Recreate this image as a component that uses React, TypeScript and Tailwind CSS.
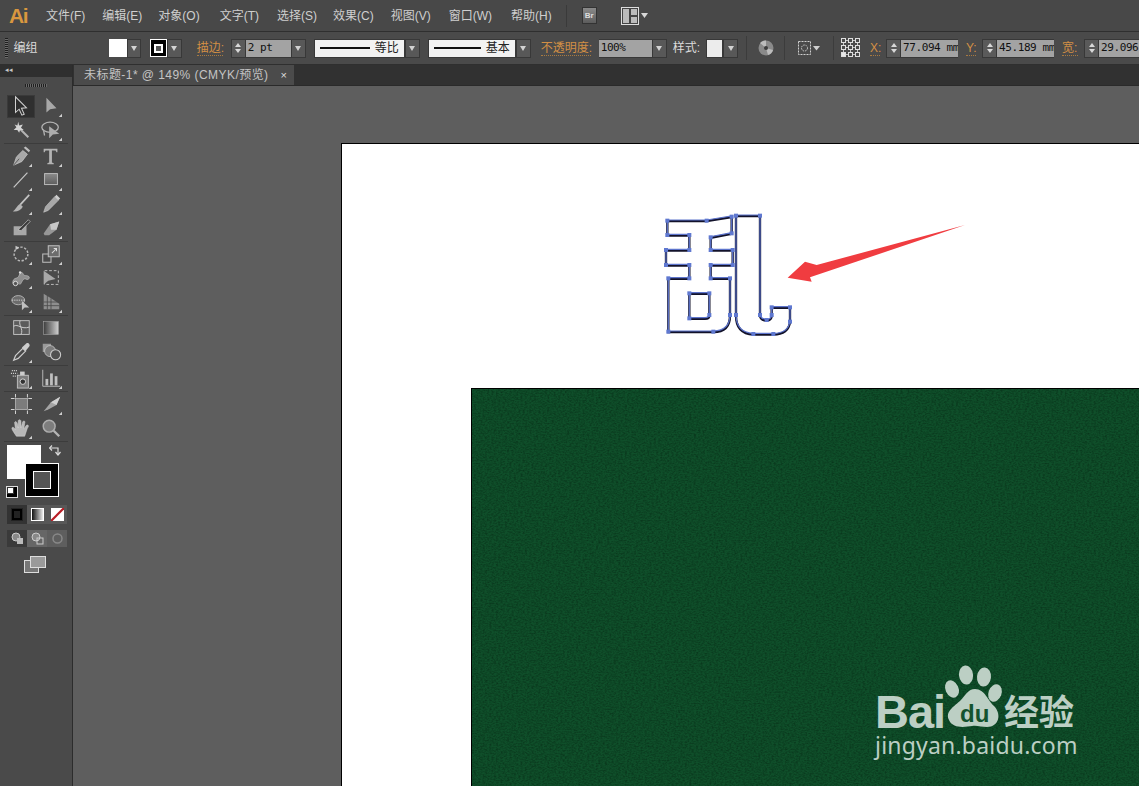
import React from "react";

const cjk = { fontFamily: '"Liberation Sans","Noto Sans CJK SC",sans-serif' };

function Drop({ w = "w-[15px]" }: { w?: string }) {
  return (
    <div className={`${w} h-[19px] bg-[#585858] border border-[#383838] flex items-center justify-center shrink-0`}>
      <div className="w-0 h-0 border-l-[3.5px] border-r-[3.5px] border-t-[5px] border-l-transparent border-r-transparent border-t-[#d2d2d2]" />
    </div>
  );
}

function Spin() {
  return (
    <div className="w-[15px] h-[19px] bg-[#5a5a5a] border border-[#383838] flex flex-col items-center justify-center gap-[2px] shrink-0">
      <div className="w-0 h-0 border-l-[3.5px] border-r-[3.5px] border-b-[4px] border-l-transparent border-r-transparent border-b-[#d8d8d8]" />
      <div className="w-0 h-0 border-l-[3.5px] border-r-[3.5px] border-t-[4px] border-l-transparent border-r-transparent border-t-[#d8d8d8]" />
    </div>
  );
}

function Field({ w, text }: { w: string; text: string }) {
  return (
    <div className={`${w} h-[19px] bg-[#a3a3a3] border-y border-[#383838] text-[#111] text-[11px] leading-[16px] pl-[2px] overflow-hidden whitespace-nowrap shrink-0`} style={{ fontFamily: '"DejaVu Sans Mono",monospace', letterSpacing: "-0.4px" }}>
      {text}
    </div>
  );
}

function Label({ text, ml, w }: { text: string; ml: string; w: string }) {
  return (
    <div className={`${ml} ${w} h-[15px] text-[12px] leading-[14px] text-[#d28f45] border-b border-dotted border-[#a87a40] whitespace-nowrap shrink-0`}>{text}</div>
  );
}

function LineBox({ w, label, ml }: { w: string; label: string; ml: string }) {
  return (
    <div className={`${ml} flex shrink-0`}>
      <div className={`${w} h-[19px] bg-[#f2f2f2] border border-[#383838] flex items-center pl-[5px] pr-[5px] gap-[5px] text-[#222] text-[12px]`}>
        <div className="flex-1 h-[2px] bg-[#111]" />
        <span className="whitespace-nowrap">{label}</span>
      </div>
      <Drop />
    </div>
  );
}

const Sep = ({ ml }: { ml: string }) => <div className={`${ml} w-px h-[24px] bg-[#3c3c3c] shrink-0`} />;

const c = "#b4b4b4";
const corner = <polygon points="24,24 24,20.5 20.5,24" fill="#d0d0d0" />;

const icons: Record<string, React.ReactNode> = {
  sel: <path d="M6 2 L6 19 L10 15.5 L13 22 L15.5 21 L12.5 14.5 L18 14 Z" fill="#2d2d2d" stroke="#d0d0d0" strokeWidth="1.1" />,
  dsel: <>
    <path d="M7 3 L7 19 L11 15.5 L18 14.5 Z" fill="#a8a8a8" />
    {corner}
  </>,
  wand: <>
    <path d="M11 11 L20 20" stroke={c} strokeWidth="2.2" />
    <path d="M9 3 L10 7 L14 6 L12 9.5 L15 12 L11 12 L10 15 L8 12 L4 12 L7 9 L5 6 L8 7 Z" fill="#d4d4d4" />
  </>,
  lasso: <>
    <ellipse cx="11" cy="9" rx="9" ry="5.5" fill="none" stroke={c} strokeWidth="1.4" />
    <path d="M10 8 L10 21 L14 17 L21 16 Z" fill="#adadad" />
    <path d="M4 13 L5 18" stroke={c} strokeWidth="1.4" />
    {corner}
  </>,
  pen: <>
    <path d="M14 6 L19 10 L13 18 L4 22 L7 13 Z" fill="#a8a8a8" stroke="#d0d0d0" strokeWidth="0.7" />
    <path d="M15 3 L17 1.5 L22 6 L20.5 8 Z" fill="#bcbcbc" />
    <path d="M4 22 L10 15" stroke="#555" strokeWidth="1" />
    {corner}
  </>,
  type: <>
    <path d="M4 4 H19 V8 H18 L17 6 H13 V19 L15 20 V21 H8 V20 L10 19 V6 H6 L5 8 H4 Z" fill="#b4b4b4" />
    {corner}
  </>,
  line: <>
    <path d="M4 20 L19 4" stroke="#c8c8c8" strokeWidth="1.3" />
    {corner}
  </>,
  rect: <>
    <defs>
      <linearGradient id="rg" x1="0" y1="0" x2="0" y2="1"><stop offset="0" stopColor="#8a8a8a" /><stop offset="1" stopColor="#5e5e5e" /></linearGradient>
    </defs>
    <rect x="5" y="5" width="14" height="12" fill="url(#rg)" stroke="#c0c0c0" strokeWidth="1" />
    {corner}
  </>,
  brush: <>
    <path d="M21 2 L11 13" stroke="#c4c4c4" strokeWidth="1.8" />
    <path d="M11 12 L14 15 C12 19 7 21 3 20 C6 19 7 14 11 12 Z" fill="#b4b4b4" />
    {corner}
  </>,
  pencil: <>
    <path d="M16 4 L20 8 L9 19 L4 21 L6 15 Z" fill="#a8a8a8" stroke="#cecece" strokeWidth="0.6" />
    <path d="M16 4 L18 2 L22 6 L20 8 Z" fill="#cecece" />
    {corner}
  </>,
  blob: <>
    <path d="M4 10 H13 L18 7 V20 H4 Z" fill="#a8a8a8" />
    <path d="M9 14 L20 3 L22 5 L12 15 Z" fill="#3a3a3a" stroke="#d0d0d0" strokeWidth="0.7" />
  </>,
  eraser: <>
    <path d="M4 18 L11 8 L21 5 L18 14 L10 20 L5 20 Z" fill="#969696" />
    <path d="M11 8 L21 5 L18 14 L12 14 Z" fill="#c8c8c8" />
    {corner}
  </>,
  rotate: <>
    <circle cx="12" cy="12" r="7.5" fill="none" stroke="#b8b8b8" strokeWidth="1.6" strokeDasharray="2.5 1.8" />
    <path d="M6 3 L10 5 L6 8 Z" fill="#c8c8c8" />
    {corner}
  </>,
  scale: <>
    <rect x="3" y="12" width="9" height="9" fill="none" stroke="#bfbfbf" strokeWidth="1.1" />
    <rect x="9" y="3" width="12" height="12" fill="#6c6c6c" stroke="#bfbfbf" strokeWidth="1.1" />
    <path d="M13 11 L18 6 M15 6 H18 V9" stroke="#ddd" strokeWidth="1.1" fill="none" />
    {corner}
  </>,
  warp: <>
    <path d="M3 18 C3 10 9 14 10 9 C11 6 13 5 14 7 C15 11 19 8 21 11 C21 14 19 14 17 13 C14 12 13 17 11 19" fill="#8e8e8e" stroke="#bfbfbf" strokeWidth="0.8" />
    <circle cx="6" cy="18" r="2.4" fill="#555" stroke="#e0e0e0" strokeWidth="1" />
    <circle cx="11" cy="6" r="1.3" fill="#ddd" />
    {corner}
  </>,
  free: <>
    <rect x="5" y="4" width="15" height="15" fill="none" stroke="#c4c4c4" strokeWidth="1" strokeDasharray="3 2" />
    <path d="M4 4 L4 19 L9 15 L17 13 Z" fill="#a8a8a8" />
  </>,
  shape: <>
    <ellipse cx="9" cy="10" rx="7" ry="5" fill="#6c6c6c" stroke="#bfbfbf" strokeWidth="0.9" />
    <path d="M2 10 H16" stroke="#ddd" strokeWidth="0.9" strokeDasharray="1.5 1" />
    <path d="M13 11 L13 21 L16 18 L21 18 Z" fill="#c0c0c0" />
    {corner}
  </>,
  persp: <>
    <path d="M4 3 L12 8 L21 14 V20 H4 Z" fill="#8e8e8e" />
    <path d="M8 5 V20 M12 8 V20 M4 12 H21 M4 16 H21" stroke="#4a4a4a" strokeWidth="0.9" />
    {corner}
  </>,
  mesh: <>
    <rect x="4" y="4" width="17" height="15" fill="#5c5c5c" stroke="#c4c4c4" strokeWidth="1" />
    <path d="M4 10 C9 7 12 14 21 11 M11 4 C9 9 15 13 12 19" stroke="#d4d4d4" strokeWidth="1" fill="none" />
  </>,
  grad: <>
    <defs>
      <linearGradient id="gg"><stop offset="0" stopColor="#3e3e3e" /><stop offset="1" stopColor="#cecece" /></linearGradient>
    </defs>
    <rect x="4" y="5" width="16" height="14" fill="url(#gg)" stroke="#aaa" strokeWidth="0.6" />
  </>,
  drop: <>
    <path d="M4 21 L6 16 L14 8 L17 11 L9 19 Z" fill="none" stroke="#cccccc" strokeWidth="1.3" />
    <path d="M13 7 L18 2.5 C20 1.5 22.5 4 21 6 L17 11 Z" fill="#cccccc" />
    {corner}
  </>,
  blend: <>
    <rect x="3" y="3" width="9" height="9" fill="#999" />
    <circle cx="11" cy="11" r="6" fill="#7c7c7c" stroke="#ccc" strokeWidth="0.8" />
    <circle cx="17" cy="15" r="5.5" fill="#505050" stroke="#ccc" strokeWidth="1.2" />
  </>,
  spray: <>
    <rect x="8" y="9" width="12" height="14" fill="#7c7c7c" stroke="#cccccc" strokeWidth="0.9" />
    <circle cx="14" cy="16" r="3" fill="#333" stroke="#ddd" strokeWidth="1" />
    <rect x="11" y="5" width="5" height="4" fill="#ccc" />
    <path d="M2 4 H8 M1 7 H8 M3 10 H7" stroke="#ccc" strokeWidth="1.2" strokeDasharray="1.2 1" />
    {corner}
  </>,
  graph: <>
    <path d="M3 3 V21 H22" stroke="#c0c0c0" strokeWidth="1" fill="none" />
    <rect x="6" y="13" width="3" height="7" fill="#bfbfbf" />
    <rect x="11" y="7" width="3" height="13" fill="#bfbfbf" />
    <rect x="16" y="10" width="3" height="10" fill="#bfbfbf" />
    {corner}
  </>,
  board: <>
    <rect x="6" y="6" width="13" height="12" fill="#7c7c7c" stroke="#bfbfbf" strokeWidth="0.8" />
    <path d="M1 6 H5 M20 6 H24 M1 18 H5 M20 18 H24 M6 1 V5 M6 19 V23 M19 1 V5 M19 19 V23" stroke="#d2d2d2" strokeWidth="1.1" />
  </>,
  slice: <>
    <path d="M4 20 L12 10 L22 4 L18 13 L9 18 Z" fill="#a4a4a4" />
    <path d="M12 10 L22 4 L18 13 Z" fill="#d0d0d0" />
    {corner}
  </>,
  hand: <>
    <path d="M7 21 C5 18 2 14 2 12 C3 10 5 12 6 14 L5 6 C6 4 7 5 8 7 L9 12 L9 4 C10 2 12 3 12 5 L12 12 L14 5 C15 4 17 4 16 7 L15 13 L18 9 C20 8 21 10 19 12 L16 21 Z" fill="#b8b8b8" stroke="#ddd" strokeWidth="0.5" />
    {corner}
  </>,
  zoom: <>
    <circle cx="10" cy="10" r="6.5" fill="#7d7d7d" stroke="#adadad" strokeWidth="1.6" />
    <path d="M15 15 L21 21" stroke="#b4b4b4" strokeWidth="2.6" />
  </>,
};

function Tool({ n, active }: { n: string; active?: boolean }) {
  return (
    <div className="w-[30px] h-[24px] flex items-center justify-center">
      <div className={`w-[28px] h-[23px] flex items-center justify-center ${active ? "bg-[#2f2f2f] border border-[#3a3a3a]" : ""}`}>
        <svg width="22" height="22" viewBox="0 0 24 24">{icons[n]}</svg>
      </div>
    </div>
  );
}

function ToolRow({ a, b, active }: { a: string; b: string; active?: boolean }) {
  return (
    <div className="flex pl-[6px]">
      <Tool n={a} active={active} />
      <Tool n={b} />
    </div>
  );
}

const ToolSep = () => <div className="h-[2px] mx-[4px] border-b border-[#3c3c3c]" />;

const menus = [
  ["文件(F)", "ml-[19px]"],
  ["编辑(E)", "ml-[17px]"],
  ["对象(O)", "ml-[16px]"],
  ["文字(T)", "ml-[20px]"],
  ["选择(S)", "ml-[18px]"],
  ["效果(C)", "ml-[16px]"],
  ["视图(V)", "ml-[17px]"],
  ["窗口(W)", "ml-[18px]"],
  ["帮助(H)", "ml-[19px]"],
];

function Glyph() {
  const left = "M52 62 L170 62 L245 50 L245 100 L182 112 L182 150 L248 150 L248 195 L182 195 L182 235 L240 235 L240 345 Q240 395 190 395 L55 395 L55 235 L118 235 L118 195 L48 195 L48 150 L118 150 L118 105 L52 105 Z";
  const inner = "M118 280 L178 280 L178 345 Q178 355 165 355 L118 355 Z";
  const right = "M258 47 L330 47 L330 345 Q332 360 350 360 Q365 360 365 345 L365 322 L420 322 L420 365 Q415 402 370 402 L310 402 Q258 400 258 345 Z";
  const pts = [[52,62],[170,62],[245,50],[245,100],[182,112],[182,150],[248,150],[248,195],[182,195],[182,235],[240,235],[240,345],[190,395],[55,395],[55,235],[118,235],[118,195],[48,195],[48,150],[118,150],[118,105],[52,105],[118,280],[178,280],[178,345],[118,355],[258,47],[330,47],[330,345],[350,360],[365,345],[365,322],[420,322],[420,365],[370,402],[310,402],[258,345]];
  return (
    <svg className="absolute left-[577px] top-[114px]" width="320" height="150" viewBox="0 0 960 450">
      {[left, inner, right].map((d, i) => (
        <g key={i} fill="none">
          <path d={d} stroke="#12122a" strokeWidth="7" transform="translate(0 1.5)" />
          <path d={d} stroke="#5d74cc" strokeWidth="3.5" transform="translate(0 -2)" />
        </g>
      ))}
      {pts.map(([x, y], i) => <rect key={i} x={x - 6} y={y - 6} width="12" height="12" fill="#5f78d0" />)}
      <polygon points="945,75 500,195 465,185 413,233 485,245 480,232" fill="#f03c40" />
    </svg>
  );
}

function Watermark() {
  const col = "#bccfc4";
  return (
    <div className="absolute left-[802px] top-[579px] w-[210px] h-[100px]" style={cjk}>
      <div className="relative w-full h-full" style={{ color: col }}>
        <div className="absolute left-0 top-[27px] text-[47px] leading-[40px] font-bold" style={{ fontFamily: '"Liberation Sans",sans-serif', letterSpacing: "-1px" }}>Bai</div>
        <svg className="absolute left-[66px] top-0" width="66" height="72" viewBox="0 0 66 72">
          <ellipse cx="25" cy="10" rx="7" ry="9.5" fill={col} transform="rotate(-6 25 10)" />
          <ellipse cx="43" cy="12" rx="7" ry="9.5" fill={col} transform="rotate(6 43 12)" />
          <ellipse cx="11" cy="24" rx="6.5" ry="9" fill={col} transform="rotate(-25 11 24)" />
          <ellipse cx="54" cy="28" rx="6.5" ry="9" fill={col} transform="rotate(20 54 28)" />
          <path d="M34 24 C44 24 47 36 53 41 C61 49 58 62 46 62 C40 62 36 60 31 61 C24 62 12 64 8 55 C4 47 12 42 19 36 C25 30 27 24 34 24 Z" fill={col} />
        </svg>
        <div className="absolute left-[85px] top-[34px] text-[24px] leading-[30px] font-bold text-[#14532f]" style={{ fontFamily: '"Liberation Sans",sans-serif' }}>du</div>
        <div className="absolute left-[129px] top-[24px] text-[35px] leading-[42px] font-bold whitespace-nowrap" style={{ fontFamily: '"Noto Sans CJK SC",sans-serif' }}>经验</div>
        <div className="absolute left-0 top-[68px] text-[23px] leading-[24px] whitespace-nowrap" style={{ fontFamily: '"Noto Sans",sans-serif', letterSpacing: "0.2px" }}>jingyan.baidu.com</div>
      </div>
    </div>
  );
}

export default function App() {
  return (
    <div className="w-[1139px] h-[786px] overflow-hidden flex flex-col bg-[#5e5e5e]" style={cjk}>
      {/* menu bar */}
      <div className="h-[32px] shrink-0 bg-[#484848] border-b border-[#2f2f2f] flex items-center text-[12px] text-[#cfcfcf]">
        <div className="ml-[9px] w-[18px] text-[21px] leading-[22px] font-bold text-[#d9973f] tracking-[-1.5px]">Ai</div>
        {menus.map(([t, m]) => <div key={t} className={`${m} whitespace-nowrap`}>{t}</div>)}
        <div className="ml-[14px] w-px h-[22px] bg-[#3a3a3a]" />
        <div className="ml-[15px] w-[15px] h-[17px] bg-[linear-gradient(#8a8a8a,#5c5c5c)] border border-[#333] text-[8px] leading-[15px] text-center text-[#ddd] font-bold">Br</div>
        <svg className="ml-[24px]" width="28" height="18" viewBox="0 0 28 18">
          <rect x="0.5" y="0.5" width="17" height="17" fill="#444" stroke="#ddd" />
          <rect x="2" y="2" width="6" height="14" fill="#bbb" />
          <rect x="10" y="2" width="6" height="6" fill="#bbb" />
          <rect x="10" y="10" width="6" height="6" fill="#bbb" />
          <polygon points="20,6 27,6 23.5,11" fill="#d8d8d8" />
        </svg>
      </div>
      {/* control bar */}
      <div className="h-[33px] shrink-0 bg-[#4a4a4a] border-b border-[#2f2f2f] flex items-center text-[12px] text-[#d4d4d4]">
        <div className="ml-[5px] w-[3px] h-[20px] bg-[repeating-linear-gradient(#1e1e1e_0_1px,#6a6a6a_1px_2px)]" />
        <div className="ml-[6px] w-[28px] whitespace-nowrap text-[#dadada]">编组</div>
        <div className="ml-[71px] w-[18px] h-[18px] bg-white shrink-0" />
        <Drop w="w-[14px]" />
        <div className="ml-[9px] w-[17px] h-[18px] bg-black border border-white flex items-center justify-center shrink-0">
          <div className="w-[9px] h-[9px] bg-[#555] border-2 border-white" />
        </div>
        <Drop w="w-[15px]" />
        <Label text="描边:" ml="ml-[15px]" w="w-[26px]" />
        <div className="ml-[8px] flex shrink-0">
          <Spin />
          <Field w="w-[45px]" text="2 pt" />
          <Drop />
        </div>
        <LineBox w="w-[91px]" label="等比" ml="ml-[8px]" />
        <LineBox w="w-[88px]" label="基本" ml="ml-[8px]" />
        <Label text="不透明度:" ml="ml-[10px]" w="w-[50px]" />
        <div className="ml-[8px] flex shrink-0">
          <Field w="w-[53px]" text="100%" />
          <Drop />
        </div>
        <div className="ml-[6px] w-[28px] text-[#dcdcdc] whitespace-nowrap">样式:</div>
        <div className="ml-[6px] flex shrink-0">
          <div className="w-[17px] h-[19px] bg-[#ececec] border border-[#383838]" />
          <Drop />
        </div>
        <Sep ml="ml-[8px]" />
        <svg className="ml-[11px] shrink-0" width="16" height="16" viewBox="0 0 16 16">
          <circle cx="8" cy="8" r="7.5" fill="#8a8a8a" />
          <path d="M8 8 L2 3 A7.5 7.5 0 0 1 8 .5 Z M8 8 L15 10 A7.5 7.5 0 0 1 10 15 Z" fill="#bcbcbc" />
          <circle cx="8" cy="8" r="2" fill="#3c3c3c" />
        </svg>
        <Sep ml="ml-[10px]" />
        <svg className="ml-[12px] shrink-0" width="24" height="16" viewBox="0 0 24 16">
          <rect x="1.5" y="1.5" width="12" height="13" fill="none" stroke="#d0d0d0" strokeDasharray="2 1" />
          <circle cx="7.5" cy="8" r="3" fill="none" stroke="#d0d0d0" strokeDasharray="1.5 1" />
          <polygon points="16,6 23,6 19.5,10.5" fill="#d0d0d0" />
        </svg>
        <Sep ml="ml-[12px]" />
        <svg className="ml-[7px] shrink-0" width="19" height="20" viewBox="0 0 19 20">
          <path d="M5 2.5 H7 M12 2.5 H14 M5 9.5 H7 M12 9.5 H14 M5 16.5 H7 M12 16.5 H14 M2.5 5 V7 M2.5 12 V14 M9.5 5 V7 M9.5 12 V14 M16.5 5 V7 M16.5 12 V14" stroke="#c8c8c8" strokeWidth="1" />
          {[0, 1, 2].map((r) => [0, 1, 2].map((k) => (
            <rect key={`${r}${k}`} x={0.5 + k * 7} y={0.5 + r * 7} width="4" height="4" fill={r === 2 && k === 0 ? "#e8e8e8" : "none"} stroke="#dedede" strokeWidth="1" />
          )))}
        </svg>
        <Label text="X:" ml="ml-[10px]" w="w-[10px]" />
        <div className="ml-[6px] flex shrink-0"><Spin /><Field w="w-[57px]" text="77.094 mm" /></div>
        <Label text="Y:" ml="ml-[8px]" w="w-[10px]" />
        <div className="ml-[6px] flex shrink-0"><Spin /><Field w="w-[57px]" text="45.189 mm" /></div>
        <Label text="宽:" ml="ml-[8px]" w="w-[16px]" />
        <div className="ml-[6px] flex shrink-0"><Spin /><Field w="w-[40px]" text="29.096" /></div>
      </div>
      {/* body */}
      <div className="flex-1 flex min-h-0">
        {/* tools */}
        <div className="w-[73px] shrink-0 flex flex-col bg-[#4a4a4a] border-r border-[#2c2c2c]">
          <div className="h-[12px] bg-[#2f2f2f] text-[#c8c8c8] text-[7px] leading-[10px] pl-[5px]">◂◂</div>
          <div className="h-[17px] flex justify-center items-center">
            <div className="w-[22px] h-[3px] bg-[repeating-linear-gradient(90deg,#1e1e1e_0_1px,#6a6a6a_1px_2px)]" />
          </div>
          <ToolRow a="sel" b="dsel" active />
          <ToolRow a="wand" b="lasso" />
          <ToolSep />
          <ToolRow a="pen" b="type" />
          <ToolRow a="line" b="rect" />
          <ToolRow a="brush" b="pencil" />
          <ToolRow a="blob" b="eraser" />
          <ToolSep />
          <ToolRow a="rotate" b="scale" />
          <ToolRow a="warp" b="free" />
          <ToolRow a="shape" b="persp" />
          <ToolSep />
          <ToolRow a="mesh" b="grad" />
          <ToolRow a="drop" b="blend" />
          <ToolSep />
          <ToolRow a="spray" b="graph" />
          <ToolSep />
          <ToolRow a="board" b="slice" />
          <ToolRow a="hand" b="zoom" />
          <ToolSep />
          {/* fill and stroke */}
          <div className="relative h-[59px] shrink-0">
            <div className="absolute left-[7px] top-[3px] w-[34px] h-[34px] bg-white" />
            <div className="absolute left-[25px] top-[21px] w-[34px] h-[34px] bg-black border border-white flex items-center justify-center">
              <div className="w-[18px] h-[18px] bg-[#555] border border-white" />
            </div>
            <svg className="absolute left-[49px] top-[3px]" width="12" height="12" viewBox="0 0 12 12">
              <path d="M1 3 H9 V9" fill="none" stroke="#ddd" strokeWidth="1.2" />
              <path d="M3 0.5 L0.5 3 L3 5.5 M6.5 7 L9 10 L11.5 7" fill="none" stroke="#ddd" strokeWidth="1.2" />
            </svg>
            <div className="absolute left-[6px] top-[44px] w-[12px] h-[12px] border border-[#ddd] bg-black">
              <div className="w-[7px] h-[7px] bg-white border border-[#333]" />
            </div>
          </div>
          <div className="mt-[4px] ml-[7px] w-[60px] h-[19px] flex bg-[#3a3a3a] shrink-0">
            <div className="flex-1 flex items-center justify-center bg-[#333]"><div className="w-[12px] h-[13px] bg-black border border-[#222] flex items-center justify-center"><div className="w-[6px] h-[7px] bg-[#222]" /></div></div>
            <div className="flex-1 flex items-center justify-center bg-[#585858]"><div className="w-[13px] h-[13px] border border-white bg-[linear-gradient(90deg,#111,#eee)]" /></div>
            <div className="flex-1 flex items-center justify-center bg-[#585858]"><svg width="13" height="13" viewBox="0 0 13 13"><rect width="13" height="13" fill="#fff" /><path d="M0 13 L13 0" stroke="#b81c24" strokeWidth="2.2" /></svg></div>
          </div>
          <div className="mt-[6px] ml-[7px] w-[60px] h-[17px] flex shrink-0">
            <div className="flex-1 flex items-center justify-center bg-[#3a3a3a]"><svg width="13" height="13" viewBox="0 0 13 13"><circle cx="5" cy="5" r="4" fill="#888" stroke="#ccc" /><rect x="6" y="6" width="6" height="6" fill="#bbb" /></svg></div>
            <div className="flex-1 flex items-center justify-center bg-[#666]"><svg width="13" height="13" viewBox="0 0 13 13"><circle cx="5" cy="5" r="4" fill="#888" stroke="#ccc" /><rect x="6" y="6" width="6" height="6" fill="none" stroke="#ccc" /></svg></div>
            <div className="flex-1 flex items-center justify-center bg-[#5e5e5e]"><svg width="13" height="13" viewBox="0 0 13 13"><circle cx="6.5" cy="6.5" r="4.5" fill="none" stroke="#888" strokeWidth="1.5" /></svg></div>
          </div>
          <svg className="mt-[9px] ml-[24px] shrink-0" width="22" height="17" viewBox="0 0 22 17">
            <rect x="0.5" y="4.5" width="14" height="12" fill="#777" stroke="#ddd" />
            <rect x="6.5" y="0.5" width="15" height="11" fill="#9a9a9a" stroke="#ddd" />
          </svg>
        </div>
        {/* document */}
        <div className="flex-1 flex flex-col min-w-0">
          <div className="h-[21px] shrink-0 bg-[#313131] flex border-b border-[#2a2a2a]">
            <div className="w-[220px] ml-px bg-[#4b4b4b] flex items-center pl-[10px] text-[12px] text-[#c4c4c4] whitespace-nowrap">
              <span className="tracking-[0.45px]">未标题-1* @ 149% (CMYK/预览)</span>
              <span className="ml-[12px] text-[11px] leading-none text-[#ddd]">×</span>
            </div>
          </div>
          <div className="relative flex-1 min-h-0 overflow-hidden flex flex-col pl-[268px] pt-[57px] bg-[#5e5e5e]">
            <div className="flex-1 bg-white border-l border-t border-black flex flex-col pl-[129px] pt-[244px] min-h-0">
              <div className="flex-1 bg-[#0f4f2a] border-l border-t border-black relative overflow-hidden">
                <svg className="absolute inset-0 w-full h-full" aria-hidden="true">
                  <filter id="grain" colorInterpolationFilters="sRGB">
                    <feTurbulence type="fractalNoise" baseFrequency="0.45 0.7" numOctaves="2" seed="4" />
                    <feColorMatrix values="0 0 0 0 0.03  0 0 0 0 0.2  0 0 0 0 0.1  0 0 0 1.6 -0.55" />
                  </filter>
                  <rect width="100%" height="100%" filter="url(#grain)" />
                </svg>
              </div>
            </div>
            <Glyph />
            <Watermark />
          </div>
        </div>
      </div>
    </div>
  );
}
